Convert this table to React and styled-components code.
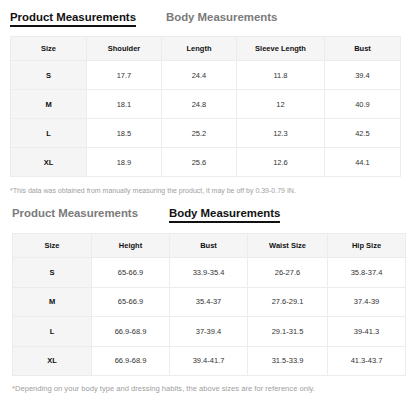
import React from "react"
import styled, { createGlobalStyle } from "styled-components"

const Global = createGlobalStyle`
  html, body {
    margin: 0;
    padding: 0;
    background: #fff;
    font-family: "Liberation Sans", Arial, Helvetica, sans-serif;
  }
`

const Page = styled.div`
  width: 416px;
  height: 400px;
  overflow: hidden;
  box-sizing: border-box;
  padding-top: 10px;
`

const Section = styled.div`
  padding-left: ${props => props.left}px;
  margin-bottom: ${props => props.gap || 0}px;
`

const Tabs = styled.div`
  display: flex;
  gap: ${props => props.gap}px;
  height: 17px;
`

const Tab = styled.div`
  font-size: 11.4px;
  line-height: 14px;
  font-weight: 700;
  color: ${props => (props.active ? "#111" : "#7a7a7a")};
  padding-bottom: 1px;
  border-bottom: 2px solid ${props => (props.active ? "#111" : "transparent")};
  height: 14px;
  white-space: nowrap;
`

const Table = styled.table`
  border-collapse: collapse;
  table-layout: fixed;
  margin-top: ${props => props.top}px;
  font-size: 7.5px;
  color: #333;

  th,
  td {
    border: 1px solid #ececec;
    text-align: center;
    padding: 0;
  }
  th {
    background: #f5f5f5;
    font-weight: 700;
    color: #111;
    height: 23px;
  }
  td {
    height: ${props => props.row}px;
  }
  td:first-child {
    background: #f5f5f5;
    font-weight: 700;
    color: #111;
  }
`

const Note = styled.div`
  font-size: ${props => props.size}px;
  line-height: 10px;
  color: #a0a0a0;
  margin-top: ${props => props.top}px;
  white-space: nowrap;
`

const product = {
  cols: ["Size", "Shoulder", "Length", "Sleeve Length", "Bust"],
  widths: [76, 75, 75, 88, 76],
  rows: [
    ["S", "17.7", "24.4", "11.8", "39.4"],
    ["M", "18.1", "24.8", "12", "40.9"],
    ["L", "18.5", "25.2", "12.3", "42.5"],
    ["XL", "18.9", "25.6", "12.6", "44.1"],
  ],
}

const body = {
  cols: ["Size", "Height", "Bust", "Waist Size", "Hip Size"],
  widths: [79, 78, 78, 80, 78],
  rows: [
    ["S", "65-66.9", "33.9-35.4", "26-27.6", "35.8-37.4"],
    ["M", "65-66.9", "35.4-37", "27.6-29.1", "37.4-39"],
    ["L", "66.9-68.9", "37-39.4", "29.1-31.5", "39-41.3"],
    ["XL", "66.9-68.9", "39.4-41.7", "31.5-33.9", "41.3-43.7"],
  ],
}

const SizeTable = ({ data, top, row }) => (
  <Table top={top} row={row} style={{ width: data.widths.reduce((a, b) => a + b, 0) }}>
    <colgroup>
      {data.widths.map((w, i) => (
        <col key={i} style={{ width: w }} />
      ))}
    </colgroup>
    <thead>
      <tr>
        {data.cols.map(c => (
          <th key={c}>{c}</th>
        ))}
      </tr>
    </thead>
    <tbody>
      {data.rows.map(r => (
        <tr key={r[0]}>
          {r.map((v, i) => (
            <td key={i}>{v}</td>
          ))}
        </tr>
      ))}
    </tbody>
  </Table>
)

export default function App() {
  return (
    <Page>
      <Global />
      <Section left={10} gap={10}>
        <Tabs gap={30}>
          <Tab active>Product Measurements</Tab>
          <Tab>Body Measurements</Tab>
        </Tabs>
        <SizeTable data={product} top={9} row={28} />
        <Note top={9} size={7}>
          *This data was obtained from manually measuring the product, it may be off by 0.39-0.79 IN.
        </Note>
      </Section>
      <Section left={12}>
        <Tabs gap={31}>
          <Tab>Product Measurements</Tab>
          <Tab active>Body Measurements</Tab>
        </Tabs>
        <SizeTable data={body} top={10} row={28.5} />
        <Note top={8} size={7.6}>
          *Depending on your body type and dressing habits, the above sizes are for reference only.
        </Note>
      </Section>
    </Page>
  )
}
